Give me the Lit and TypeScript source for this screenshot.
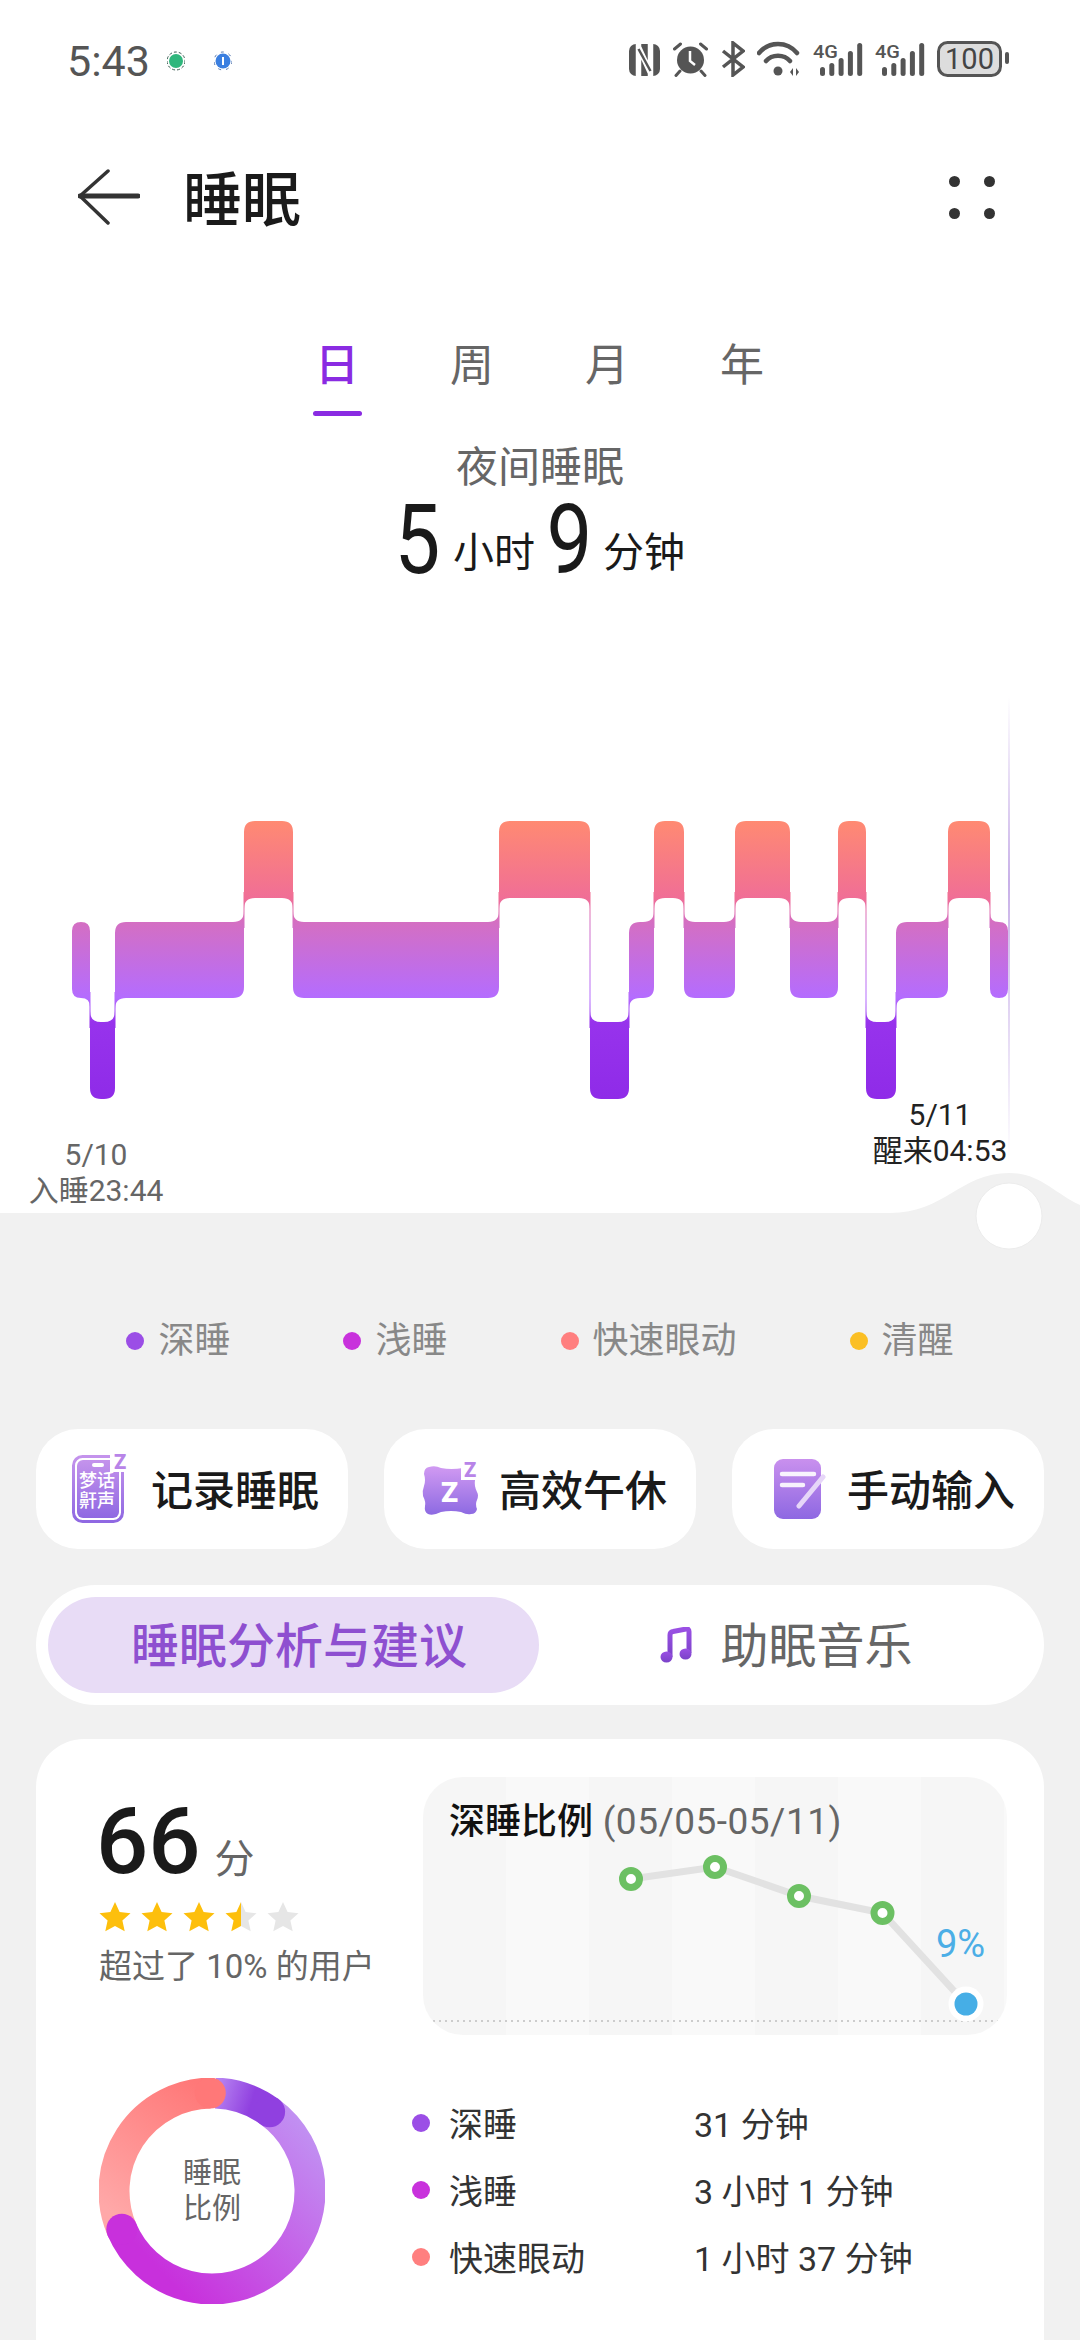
import { LitElement, css, html, svg } from "lit";
import { customElement } from "lit/decorators.js";

type Band = "rem" | "light" | "deep";

const BANDS: Record<Band, { top: number; bottom: number }> = {
  rem: { top: 141, bottom: 218 },
  light: { top: 242, bottom: 318 },
  deep: { top: 342, bottom: 419 },
};

// [band, right edge]; chart starts at x = 72
const SEGMENTS: [Band, number][] = [
  ["light", 90],
  ["deep", 115],
  ["light", 244],
  ["rem", 293],
  ["light", 499],
  ["rem", 590],
  ["deep", 629],
  ["light", 654],
  ["rem", 684],
  ["light", 735],
  ["rem", 790],
  ["light", 838],
  ["rem", 866],
  ["deep", 896],
  ["light", 948],
  ["rem", 990],
  ["light", 1008],
];

const CORNER = 11;

function segmentPath(i: number): string {
  const [band, x1] = SEGMENTS[i];
  const x0 = i === 0 ? 72 : SEGMENTS[i - 1][1];
  const { top: t, bottom: b } = BANDS[band];
  const prev = i > 0 ? BANDS[SEGMENTS[i - 1][0]] : null;
  const next = i < SEGMENTS.length - 1 ? BANDS[SEGMENTS[i + 1][0]] : null;
  const r = Math.min(CORNER, (x1 - x0) / 2);

  let d = "";
  // top left
  if (prev && prev.top < t) d += `M${x0} ${t - r} Q${x0} ${t} ${x0 + r} ${t}`;
  else d += `M${x0} ${t + r} Q${x0} ${t} ${x0 + r} ${t}`;
  // top right
  if (next && next.top < t) d += `L${x1 - r} ${t} Q${x1} ${t} ${x1} ${t - r}`;
  else d += `L${x1 - r} ${t} Q${x1} ${t} ${x1} ${t + r}`;
  // bottom right
  if (next && next.bottom > b) d += `L${x1} ${b + r} Q${x1} ${b} ${x1 - r} ${b}`;
  else d += `L${x1} ${b - r} Q${x1} ${b} ${x1 - r} ${b}`;
  // bottom left
  if (prev && prev.bottom > b) d += `L${x0 + r} ${b} Q${x0} ${b} ${x0} ${b + r}`;
  else d += `L${x0 + r} ${b} Q${x0} ${b} ${x0} ${b - r}`;
  return d + "Z";
}

function polar(deg: number, r = 98): [number, number] {
  const a = (deg * Math.PI) / 180;
  return [113 + r * Math.sin(a), 113 - r * Math.cos(a)];
}

function arc(from: number, to: number): string {
  const [x0, y0] = polar(from);
  const [x1, y1] = polar(to);
  return `M${x0} ${y0}A98 98 0 ${to - from > 180 ? 1 : 0} 1 ${x1} ${y1}`;
}

const STAR = "M16 1l4.6 10 10.9 1.2-8.1 7.4 2.3 10.7L16 24.900l-9.700 5.400 2.300-10.700L.5 12.200 11.400 11z";
const LEGEND = [
  ["深睡", "#9b4ee6"],
  ["浅睡", "#c832dc"],
  ["快速眼动", "#ff7f7f"],
  ["清醒", "#fbbf24"],
];
const STAGES = [
  ["深睡", "#9b4ee6", "31 分钟"],
  ["浅睡", "#c832dc", "3 小时 1 分钟"],
  ["快速眼动", "#ff7f7f", "1 小时 37 分钟"],
];
const TREND: [number, number][] = [
  [208, 102],
  [292, 90],
  [376, 119],
  [459.5, 136],
  [543, 227],
];

@customElement("app-root")
export class AppRoot extends LitElement {
  private renderSignal() {
    const bars = [9, 13, 18, 25, 33];
    return html`<svg width="50" height="36" viewBox="0 0 50 36">
      <text x="0" y="17" class="net" textLength="25" lengthAdjust="spacingAndGlyphs">4G</text>
      ${bars.map(
        (h, i) => svg`<rect x=${7 + i * 9.3} y=${35 - h} width="5" height=${h} rx="2.500" fill="#555" />`,
      )}
    </svg>`;
  }

  private renderStatus() {
    return html`<div class="status">
      <span class="time">5:43</span>
      <svg class="notif" width="18" height="22" viewBox="0 0 18 22">
        <circle cx="9" cy="11" r="9" fill="none" stroke="#3a5a50" stroke-width="1" stroke-dasharray="3 2" />
        <circle cx="9" cy="11" r="7" fill="#2fb67c" />
      </svg>
      <svg class="notif second" width="18" height="22" viewBox="0 0 18 22">
        <circle cx="9" cy="11" r="9" fill="none" stroke="#5a7ab0" stroke-width="1" stroke-dasharray="3 5" />
        <circle cx="9" cy="11" r="7.500" fill="#3b7fe0" />
        <rect x="8" y="7" width="2" height="8" fill="#fff" />
      </svg>
      <div class="sys">
        <svg width="31" height="36" viewBox="0 0 31 36">
          <rect x="0" y="3" width="31" height="32" rx="7" fill="#555" />
          <path d="M9.500 3v32M9.500 6l12 26M21.500 3v32" fill="none" stroke="#fff" stroke-width="5.500" />
          <path d="M9.500 8l12 22" fill="none" stroke="#555" stroke-width="2.500" />
        </svg>
        <svg width="37" height="36" viewBox="0 0 37 36">
          <circle cx="18.500" cy="19" r="13.500" fill="#555" />
          <path d="M18 10v10l5 4" fill="none" stroke="#fff" stroke-width="2.500" />
          <path d="M2.500 8l6-5M34.500 8l-6-5M8 30l-4 4.500M29 30l4 4.500" stroke="#555" stroke-width="3" stroke-linecap="round" />
        </svg>
        <svg width="24" height="36" viewBox="0 0 24 36">
          <path d="M2 10l20 16-10 8V2l10 8L2 26" fill="none" stroke="#555" stroke-width="3.500" />
        </svg>
        <svg width="44" height="36" viewBox="0 0 44 36">
          <path d="M2 12C12 0 30 0 40 12M9 20c6-7 18-7 24 0" fill="none" stroke="#555" stroke-width="4.500" stroke-linecap="round" />
          <circle cx="21" cy="30" r="4.500" fill="#555" />
          <path d="M33 31l3-4v8zM39 27l3 4-3 4z" fill="#555" />
        </svg>
        ${this.renderSignal()} ${this.renderSignal()}
        <svg width="72" height="36" viewBox="0 0 72 36">
          <rect x="1.500" y="1.500" width="62" height="33" rx="9" fill="#ddd" stroke="#555" stroke-width="3" />
          <text x="32.500" y="28" class="batt" text-anchor="middle">100</text>
          <rect x="68" y="11" width="4" height="12" rx="2" fill="#555" />
        </svg>
      </div>
    </div>`;
  }

  private renderChart() {
    const connectors = SEGMENTS.slice(1).map(([band], i) => {
      const a = BANDS[SEGMENTS[i][0]];
      const b = BANDS[band];
      const y0 = Math.min(a.bottom, b.bottom) - 6;
      const y1 = Math.max(a.top, b.top) + 6;
      return svg`<rect x=${SEGMENTS[i][1] - 1} y=${y0} width="2" height=${y1 - y0} fill="url(#sleep)" opacity="0.5" />`;
    });
    return html`<div class="chart">
      <svg class="canvas" width="1080" height="533" viewBox="0 0 1080 533">
        <defs>
          <linearGradient id="sleep" gradientUnits="userSpaceOnUse" x1="0" y1="141" x2="0" y2="419">
            <stop offset="0" stop-color="#ff8a72" />
            <stop offset="0.277" stop-color="#f06e96" />
            <stop offset="0.363" stop-color="#d46fc2" />
            <stop offset="0.637" stop-color="#b46cff" />
            <stop offset="0.723" stop-color="#9733ec" />
            <stop offset="1" stop-color="#8f2be8" />
          </linearGradient>
          <linearGradient id="cursor" x1="0" y1="0" x2="0" y2="1">
            <stop offset="0" stop-color="#c8b0e8" stop-opacity="0" />
            <stop offset="0.4" stop-color="#c8b0e8" />
            <stop offset="1" stop-color="#c8b0e8" stop-opacity="0" />
          </linearGradient>
        </defs>
        <rect x="1008" y="16" width="2" height="466" fill="url(#cursor)" />
        ${connectors}
        ${SEGMENTS.map((_, i) => svg`<path d=${segmentPath(i)} fill="url(#sleep)" />`)}
        <path d="M890 533C945 533 960 493 1009 493C1040 493 1055 514 1080 525V533Z" fill="#f1f1f1" />
        <circle cx="1009" cy="536" r="33" fill="#fff" stroke="#ececec" />
      </svg>
      <div class="stamp start">5/10<br />入睡23:44</div>
      <div class="stamp end">5/11<br />醒来04:53</div>
    </div>`;
  }

  private renderActions() {
    return html`<div class="actions">
      <div class="action first">
        <svg width="60" height="82" viewBox="0 -6 60 82">
          <defs>
            <linearGradient id="ic" x1="0" y1="0" x2="0" y2="1">
              <stop offset="0" stop-color="#c493ec" />
              <stop offset="1" stop-color="#8f68e2" />
            </linearGradient>
          </defs>
          <rect x="1.500" y="2.500" width="49" height="65" rx="9" fill="none" stroke="url(#ic)" stroke-width="3" />
          <rect x="5" y="6" width="42" height="58" rx="6" fill="url(#ic)" />
          <rect x="38" y="0" width="22" height="18" fill="#fff" />
          <rect x="20" y="9" width="12" height="4" rx="2" fill="#fff" />
          <text x="7" y="33" class="glyph">梦话</text>
          <text x="7" y="53" class="glyph">鼾声</text>
          <text x="42" y="15" class="zed">Z</text>
        </svg>
        <span>记录睡眠</span>
      </div>
      <div class="action second">
        <svg width="60" height="66" viewBox="0 -6 60 66">
          <defs>
            <linearGradient id="ip" x1="0" y1="0" x2="0" y2="1">
              <stop offset="0" stop-color="#d19af2" />
              <stop offset="1" stop-color="#8d6ae2" />
            </linearGradient>
          </defs>
          <path d="M8 5Q14 3 20 6Q30 8 42 6Q50 3 54 7Q56 12 54 18Q53 24 56 30Q58 33 56 38Q54 42 56 47Q55 52 50 52Q46 53 40 50Q30 48 20 50Q12 54 7 52Q3 50 4 44Q5 40 2 34Q1 29 3 24Q5 18 3 12Q3 6 8 5Z" fill="url(#ip)" />
          <text x="20" y="40" class="zed big">Z</text>
          <rect x="40" y="-2" width="20" height="20" fill="#fff" />
          <text x="43" y="15" class="zed">Z</text>
        </svg>
        <span>高效午休</span>
      </div>
      <div class="action third">
        <svg width="52" height="60" viewBox="0 0 52 60">
          <defs>
            <linearGradient id="im" x1="0" y1="0" x2="0" y2="1">
              <stop offset="0" stop-color="#c990ee" />
              <stop offset="1" stop-color="#8e68e2" />
            </linearGradient>
          </defs>
          <rect x="0" y="0" width="47" height="60" rx="9" fill="url(#im)" />
          <path d="M8 15H40M8 26H29" stroke="#fff" stroke-width="4.500" stroke-linecap="round" opacity="0.9" />
          <path d="M49 18L25 47" stroke="#e6d6f8" stroke-width="5" stroke-linecap="round" />
        </svg>
        <span>手动输入</span>
      </div>
    </div>`;
  }

  private renderTrend() {
    return html`<div class="trend">
      <svg class="canvas" width="584" height="258" viewBox="0 0 584 258">
        <path d="M10 244H577" stroke="#ccc" stroke-width="2" stroke-dasharray="2 4" />
        <polyline points=${TREND.map((p) => p.join(",")).join(" ")} fill="none" stroke="#e2e2e2" stroke-width="7" />
        ${TREND.slice(0, 4).map(
          ([x, y]) => svg`<circle cx=${x} cy=${y} r="8.500" fill="#fff" stroke="#6cc063" stroke-width="7" />`,
        )}
        <circle cx="543" cy="227" r="17.500" fill="#fff" />
        <circle cx="543" cy="227" r="11.500" fill="#46aee6" />
        <text x="513" y="180" class="pct">9%</text>
      </svg>
      <div class="trend-title"><b>深睡比例</b> (05/05-05/11)</div>
    </div>`;
  }

  private renderDonut() {
    const [capX, capY] = polar(36);
    return html`<div class="donut">
      <svg width="226" height="226" viewBox="0 0 226 226">
        <defs>
          <linearGradient id="dDeep" gradientUnits="userSpaceOnUse" x1="118" y1="15" x2="152" y2="26">
            <stop offset="0" stop-color="#b580f0" />
            <stop offset="1" stop-color="#9040e0" />
          </linearGradient>
          <linearGradient id="dLight" gradientUnits="userSpaceOnUse" x1="190" y1="30" x2="40" y2="170">
            <stop offset="0" stop-color="#c190f2" />
            <stop offset="1" stop-color="#c830dc" />
          </linearGradient>
          <linearGradient id="dRem" gradientUnits="userSpaceOnUse" x1="20" y1="140" x2="110" y2="15">
            <stop offset="0" stop-color="#ffa8a8" />
            <stop offset="1" stop-color="#ff7878" />
          </linearGradient>
        </defs>
        <path d=${arc(2, 36)} class="ring" stroke="url(#dDeep)" />
        <path d=${arc(247, 359)} class="ring" stroke="url(#dRem)" />
        <circle cx=${polar(359)[0]} cy=${polar(359)[1]} r="15.500" fill="#ff7878" />
        <path d=${arc(36, 247)} class="ring" stroke="url(#dLight)" />
        <circle cx=${polar(247)[0]} cy=${polar(247)[1]} r="15.500" fill="#c830dc" />
        <circle cx=${capX} cy=${capY} r="15.500" fill="#9040e0" />
      </svg>
      <div class="donut-label">睡眠<br />比例</div>
    </div>`;
  }

  render() {
    return html`
      ${this.renderStatus()}
      <div class="nav">
        <svg width="62" height="56" viewBox="0 0 62 56">
          <path d="M30 2L2 27L30 54" fill="none" stroke="#333" stroke-width="3.500" stroke-linecap="round" />
          <path d="M2 27H60" stroke="#333" stroke-width="5" stroke-linecap="round" />
        </svg>
        <span class="title">睡眠</span>
        <div class="more"><i></i><i></i><i></i><i></i></div>
      </div>
      <div class="tabs">
        <div class="tab active">日</div>
        <div class="tab">周</div>
        <div class="tab">月</div>
        <div class="tab">年</div>
      </div>
      <div class="caption">夜间睡眠</div>
      <div class="duration">
        <span class="num">5</span><span class="unit">小时</span>
        <span class="num">9</span><span class="unit">分钟</span>
      </div>
      ${this.renderChart()}
      <div class="lower">
        <div class="legend">
          ${LEGEND.map(
            ([label, color]) =>
              html`<div class="key"><i style="background:${color}"></i>${label}</div>`,
          )}
        </div>
        ${this.renderActions()}
        <div class="segment">
          <div class="seg active"><span>睡眠分析与建议</span></div>
          <div class="seg">
            <svg width="32" height="36" viewBox="0 0 32 36">
              <defs>
                <linearGradient id="note" x1="0" y1="0" x2="0" y2="1">
                  <stop offset="0" stop-color="#9a50e4" />
                  <stop offset="1" stop-color="#7a42c8" />
                </linearGradient>
              </defs>
              <path d="M10 30V8q0-3 3-3.500l13-2.500q3-.5 3 2.500V26" fill="none" stroke="url(#note)" stroke-width="5" />
              <ellipse cx="6.500" cy="30" rx="6" ry="5.500" fill="url(#note)" />
              <ellipse cx="25.500" cy="27" rx="6" ry="5.500" fill="url(#note)" />
            </svg>
            <span>助眠音乐</span>
          </div>
        </div>
        <div class="card">
          <div class="top">
            <div class="summary">
              <div class="score"><span>66</span><small>分</small></div>
              <div class="stars">
                <svg width="0" height="0" class="defs">
                  <defs>
                    <linearGradient id="half">
                      <stop offset="0.5" stop-color="#fdbf0c" />
                      <stop offset="0.5" stop-color="#e6e6e6" />
                    </linearGradient>
                  </defs>
                </svg>
                ${["#fdbf0c", "#fdbf0c", "#fdbf0c", "url(#half)", "#e6e6e6"].map(
                  (fill) => html`<svg width="32" height="31" viewBox="0 0 32 31"><path d=${STAR} fill=${fill} /></svg>`,
                )}
              </div>
              <div class="beat">超过了 10% 的用户</div>
            </div>
            ${this.renderTrend()}
          </div>
          <div class="bottom">
            ${this.renderDonut()}
            <div class="stages">
              ${STAGES.map(
                ([label, color, value]) => html`<div class="stage">
                  <i style="background:${color}"></i>
                  <span class="name">${label}</span>
                  <span>${value}</span>
                </div>`,
              )}
            </div>
          </div>
        </div>
      </div>
    `;
  }

  static styles = css`
    :host {
      display: block;
      position: relative;
      width: 1080px;
      height: 2340px;
      overflow: hidden;
      background: #fff;
      font-family: Roboto, "Noto Sans CJK SC", sans-serif;
      color: #1a1a1a;
    }

    .status {
      display: flex;
      align-items: center;
      height: 122px;
      padding: 0 71px 0 67px;
      box-sizing: border-box;
    }

    .time {
      width: 100px;
      font-size: 43px;
      color: #555;
    }

    .notif.second {
      margin-left: 29px;
    }

    .sys {
      display: flex;
      align-items: center;
      gap: 12px;
      margin-left: auto;
      padding-bottom: 4px;
    }

    .net {
      font-size: 18px;
      font-weight: 500;
      fill: #555;
    }

    .batt {
      font-size: 29px;
      fill: #444;
    }

    .nav {
      display: flex;
      align-items: center;
      height: 150px;
      padding: 0 85px 0 78px;
      box-sizing: border-box;
    }

    .title {
      margin: 0 0 4px 43px;
      font-size: 59px;
      font-weight: 500;
    }

    .more {
      display: grid;
      grid-template-columns: 11px 11px;
      gap: 21px 24px;
      margin-left: auto;
    }

    .more i {
      width: 11px;
      height: 11px;
      border-radius: 50%;
      background: #333;
    }

    .tabs {
      display: flex;
      justify-content: center;
      padding: 61px 1px 0 0;
    }

    .tab {
      position: relative;
      width: 135px;
      height: 83px;
      box-sizing: border-box;
      text-align: center;
      font-size: 44px;
      line-height: 66px;
      color: #666;
    }

    .tab.active {
      color: #8a2be2;
      font-weight: 500;
    }

    .tab.active::after {
      content: "";
      position: absolute;
      left: 43px;
      bottom: 0;
      width: 49px;
      height: 5px;
      border-radius: 3px;
      background: #8a2be2;
    }

    .caption {
      margin-top: 27px;
      height: 49px;
      text-align: center;
      font-size: 42px;
      line-height: 50px;
      color: #666;
    }

    .duration {
      display: flex;
      justify-content: center;
      align-items: baseline;
      gap: 12px;
      height: 96px;
    }

    .num {
      display: inline-block;
      width: 46px;
      margin: 0 4px 0 -4px;
      text-align: center;
      font-size: 96px;
      line-height: 96px;
      transform: scaleX(0.85);
    }

    .unit {
      font-size: 41px;
      line-height: 50px;
      transform: translateY(-6px);
    }

    .unit:last-child {
      margin-left: -2px;
    }

    .chart {
      position: relative;
      z-index: 1;
      height: 533px;
      margin-top: 92px;
    }

    .canvas {
      position: absolute;
      left: 0;
      top: 0;
      overflow: visible;
    }

    .stamp {
      position: absolute;
      width: 200px;
      text-align: center;
      font-size: 30px;
      line-height: 36px;
    }

    .stamp.start {
      left: -4px;
      top: 457px;
      color: #666;
    }

    .stamp.end {
      left: 840px;
      top: 417px;
      color: #222;
    }

    .lower {
      height: 1127px;
      background: #f1f1f1;
      padding-top: 108px;
      box-sizing: border-box;
    }

    .legend {
      display: flex;
      justify-content: center;
      gap: 113px;
      height: 40px;
      font-size: 36px;
      line-height: 40px;
      color: #888;
    }

    .key {
      display: flex;
      align-items: center;
      gap: 14px;
    }

    .key i {
      width: 18px;
      height: 18px;
      border-radius: 50%;
    }

    .actions {
      display: grid;
      grid-template-columns: repeat(3, 312px);
      gap: 36px;
      margin: 68px 36px 0;
    }

    .action {
      display: flex;
      align-items: center;
      height: 120px;
      box-sizing: border-box;
      border-radius: 42px;
      background: #fff;
      font-size: 42px;
      font-weight: 500;
    }

    .action span {
      padding-bottom: 4px;
    }

    .action.first {
      padding-left: 36px;
      gap: 19px;
    }

    .action.second {
      padding-left: 37px;
      gap: 18px;
    }

    .action.third {
      padding-left: 42px;
      gap: 21px;
    }

    .glyph {
      font-size: 18px;
      font-weight: 500;
      fill: #fff;
    }

    .zed {
      font-size: 20px;
      font-weight: 900;
      fill: #b884e8;
    }

    .zed.big {
      font-size: 28px;
      fill: #fff;
    }

    .segment {
      display: flex;
      height: 120px;
      margin: 36px 36px 0;
      padding: 12px;
      box-sizing: border-box;
      border-radius: 60px;
      background: #fff;
    }

    .seg {
      display: flex;
      flex: 1;
      align-items: center;
      justify-content: center;
      gap: 28px;
      padding-left: 2px;
      font-size: 48px;
      color: #666;
    }

    .seg span {
      padding-bottom: 6px;
    }

    .seg.active {
      flex: 0 0 480px;
      padding-left: 11px;
      border-radius: 48px;
      background: #e8dcf6;
      color: #8e4fd0;
      font-weight: 500;
    }

    .card {
      height: 640px;
      margin: 34px 36px 0;
      padding: 38px 36px 0 63px;
      box-sizing: border-box;
      border-radius: 48px 48px 0 0;
      background: #fff;
    }

    .top {
      display: flex;
    }

    .summary {
      width: 324px;
      padding-top: 19px;
    }

    .score {
      display: flex;
      align-items: baseline;
      height: 92px;
      margin-left: -3px;
      font-size: 92px;
      line-height: 92px;
      font-weight: 500;
    }

    .score small {
      margin-left: 14px;
      font-size: 40px;
      line-height: 40px;
      font-weight: 400;
      color: #666;
    }

    .stars {
      display: flex;
      gap: 10px;
      margin-top: 13px;
    }

    .defs {
      position: absolute;
    }

    .beat {
      margin-top: 13px;
      font-size: 33px;
      line-height: 44px;
      white-space: nowrap;
      color: #666;
    }

    .trend {
      position: relative;
      width: 584px;
      height: 258px;
      border-radius: 40px;
      overflow: hidden;
      background: repeating-linear-gradient(90deg, #f6f6f6 0 83px, #f9f9f9 83px 166px);
    }

    .trend-title {
      position: relative;
      padding: 25px 0 0 26px;
      font-size: 37px;
      line-height: 40px;
      letter-spacing: 0.5px;
      color: #666;
      white-space: nowrap;
    }

    .trend-title b {
      font-size: 36px;
      font-weight: 500;
      letter-spacing: 0;
      color: #111;
    }

    .pct {
      font-size: 38px;
      fill: #4baee6;
    }

    .bottom {
      display: flex;
      margin-top: 43px;
    }

    .donut {
      position: relative;
      width: 226px;
      height: 226px;
    }

    .ring {
      fill: none;
      stroke-width: 31;
    }

    .donut-label {
      position: absolute;
      inset: 0;
      display: flex;
      align-items: center;
      justify-content: center;
      text-align: center;
      font-size: 29px;
      line-height: 36px;
      color: #666;
    }

    .stages {
      margin: 11px 0 0 87px;
    }

    .stage {
      display: flex;
      align-items: center;
      height: 67px;
      font-size: 34px;
      color: #333;
    }

    .stage i {
      width: 18px;
      height: 18px;
      margin-right: 19px;
      border-radius: 50%;
    }

    .name {
      width: 245px;
    }
  `;
}

declare global {
  interface HTMLElementTagNameMap {
    "app-root": AppRoot;
  }
}
